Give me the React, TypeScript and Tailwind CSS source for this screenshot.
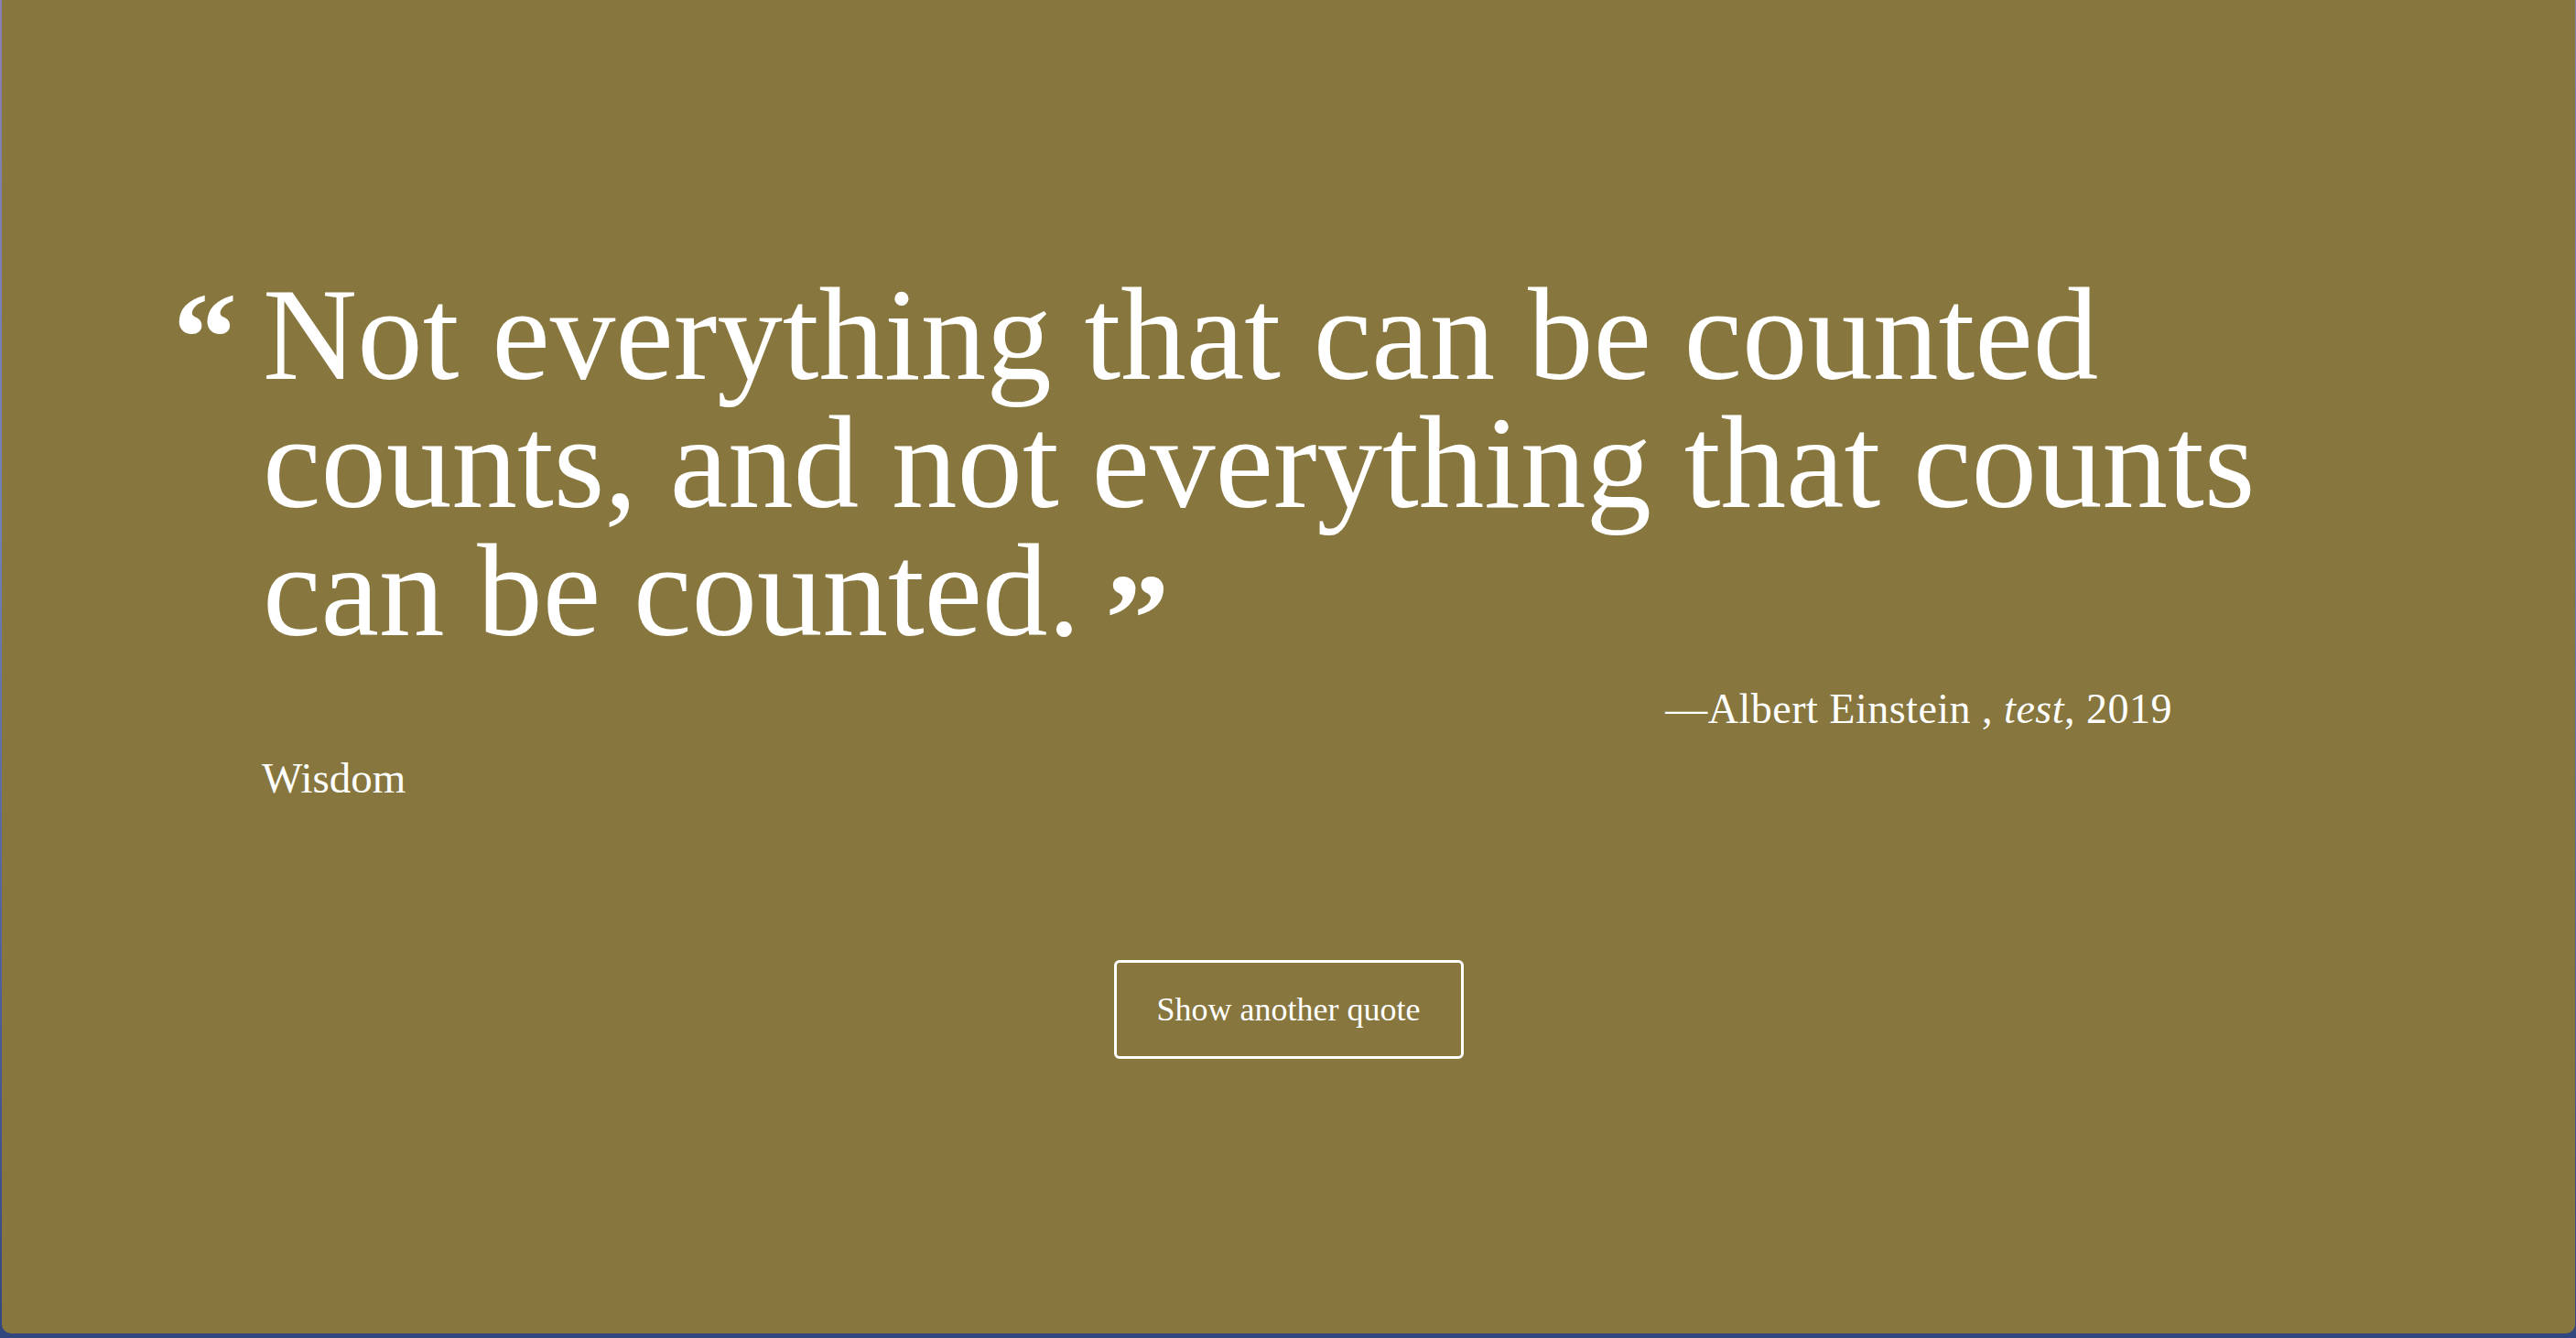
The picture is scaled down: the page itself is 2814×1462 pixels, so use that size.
export default function App() {
  return (
    <div className="min-h-[1462px] bg-[linear-gradient(180deg,#8a7fb0_0%,#6f7fb8_40%,#33477f_100%)] pl-[2px] pr-[1px] pb-[5px]">
      <div className="flex h-[1457px] flex-col rounded-b-[10px] bg-[#87763e] text-white font-['Liberation_Serif',serif]">
        <figure className="pt-[296px] pl-[187px] pr-[440px]">
          <blockquote className="flex items-start">
            <span className="mt-[3px] w-[98px] shrink-0 text-[140px] leading-none font-bold">
              &ldquo;
            </span>
            <p className="whitespace-nowrap text-[143px] leading-[140px]">
              Not everything that can be counted
              <br />
              counts, and not everything that counts
              <br />
              can be counted.
              <span className="relative top-[30px] ml-[27px] inline-block align-top text-[140px] font-bold leading-none">
                &rdquo;
              </span>
            </p>
          </blockquote>
          <figcaption className="mt-[32px] text-right text-[46px] leading-[54px] tracking-[0.5px]">
            &mdash;Albert Einstein , <cite className="italic">test</cite>, 2019
          </figcaption>
          <div className="mt-[21px] pl-[97px] text-[47px] leading-[54px]">Wisdom</div>
        </figure>
        <div className="mt-[172px] flex justify-center">
          <button className="h-[108px] w-[382px] rounded-[6px] border-[3px] border-white text-[36px]">
            Show another quote
          </button>
        </div>
      </div>
    </div>
  );
}
